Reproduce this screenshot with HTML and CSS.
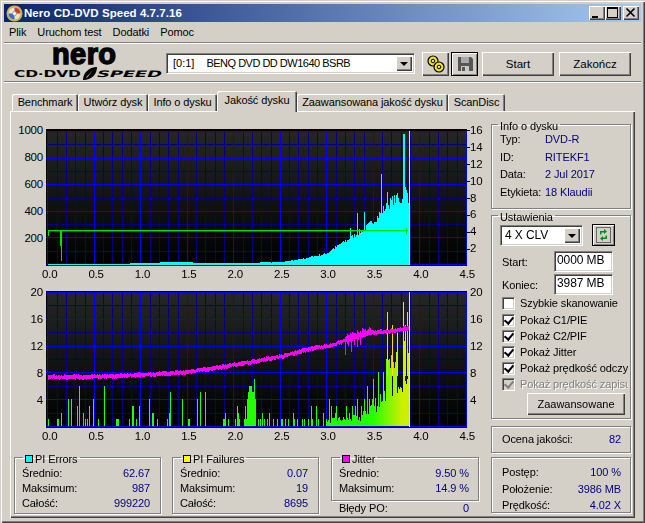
FILE: index.html
```html
<!DOCTYPE html>
<html lang="pl">
<head>
    <meta charset="UTF-8">
    <title>Nero CD-DVD Speed 4.7.7.16</title>
    <link rel="stylesheet" href="styles.css">
</head>
<body>
    <div class="window">
        <div class="titlebar">
            <svg class="app-icon" width="17" height="17" viewBox="0 0 17 17">
                <circle cx="8.5" cy="8.5" r="8" fill="#c9b458"/>
                <circle cx="8.5" cy="8.5" r="6" fill="#e8e4d0"/>
                <path d="M8.5 2.5a6 6 0 0 1 6 6h-6z" fill="#d23c28"/>
                <path d="M8.5 14.5a6 6 0 0 1-6-6h6z" fill="#3c6cc8"/>
                <circle cx="8.5" cy="8.5" r="2" fill="#fff" stroke="#777" stroke-width=".6"/>
            </svg>
            <div class="title-text">Nero CD-DVD Speed 4.7.7.16</div>
            <div class="caption-buttons">
                <div class="caption-btn">
                    <svg width="15" height="14" viewBox="0 0 15 14"><path d="M3 10h6v2H3z"/></svg>
                </div>
                <div class="caption-btn">
                    <svg width="15" height="14" viewBox="0 0 15 14"><path d="M2 1h11v11H2zM3 3v8h9V3z" fill-rule="evenodd"/></svg>
                </div>
                <div class="caption-btn caption-close">
                    <svg width="15" height="14" viewBox="0 0 15 14"><path d="M3.5 2.5l8 8M11.5 2.5l-8 8" stroke="#000" stroke-width="1.7"/></svg>
                </div>
            </div>
        </div>

        <div class="menubar">
            <span>Plik</span>
            <span>Uruchom test</span>
            <span>Dodatki</span>
            <span>Pomoc</span>
        </div>

        <div class="toolbar">
            <div class="logo">
                <div class="logo-nero">nero</div>
                <div class="logo-line">
                    <span class="logo-cd"><span>CD·DVD</span></span>
                    <svg width="15" height="13" viewBox="0 0 15 13"><path d="M1 13C1 6 7 0 15 0c0 7-5 13-14 13zM4 10.500L11 3 5 10.700z" fill="#000" fill-rule="evenodd"/></svg>
                    <span class="logo-speed"><span>SPEED</span></span>
                </div>
            </div>
            <div class="combo drive-combo">
                <div class="combo-text"><span class="drive-id">[0:1]</span>BENQ DVD DD DW1640 BSRB</div>
                <div class="combo-arrow"></div>
            </div>
            <button class="btn icon-btn">
                <svg width="20" height="20" viewBox="0 0 20 20">
                    <g fill="#f4e800" stroke="#000" stroke-width="1.2">
                        <circle cx="7" cy="7" r="5"/>
                        <circle cx="13" cy="13" r="5"/>
                    </g>
                    <circle cx="7" cy="7" r="1.800" fill="#d4d0c8" stroke="#000"/>
                    <circle cx="13" cy="13" r="1.800" fill="#d4d0c8" stroke="#000"/>
                </svg>
            </button>
            <button class="btn icon-btn btn-default">
                <svg width="18" height="18" viewBox="0 0 18 18">
                    <path d="M2 2h13l2 2v12H2z" fill="#555"/>
                    <path d="M5 2h8v6H5z" fill="#a8a8a8"/>
                    <path d="M5 11h8v5H5z" fill="#c8c8c8"/>
                    <path d="M6 12h3v4H6z" fill="#555"/>
                </svg>
            </button>
            <button class="btn text-btn">Start</button>
            <button class="btn text-btn end-btn">Zakończ</button>
        </div>

        <div class="tabs">
            <div class="tab tab-benchmark">Benchmark</div>
            <div class="tab tab-create">Utwórz dysk</div>
            <div class="tab tab-info">Info o dysku</div>
            <div class="tab tab-active">Jakość dysku</div>
            <div class="tab tab-advanced">Zaawansowana jakość dysku</div>
            <div class="tab tab-scan">ScanDisc</div>
        </div>

        <div class="panel">
            <div class="main-col">
                <div class="chart">
                    <div class="y-axis y-left">
                        <span>1000</span><span>800</span><span>600</span><span>400</span><span>200</span><span></span>
                    </div>
                    <canvas id="chartTop" width="421" height="137"></canvas>
                    <div class="y-axis y-right y-ticks">
                        <span>16</span><span>14</span><span>12</span><span>10</span><span>8</span><span>6</span><span>4</span><span>2</span><span></span>
                    </div>
                </div>
                <div class="x-axis">
                    <span>0.0</span><span>0.5</span><span>1.0</span><span>1.5</span><span>2.0</span><span>2.5</span><span>3.0</span><span>3.5</span><span>4.0</span><span>4.5</span>
                </div>

                <div class="chart chart-lower">
                    <div class="y-axis y-left">
                        <span>20</span><span>16</span><span>12</span><span>8</span><span>4</span><span></span>
                    </div>
                    <canvas id="chartBottom" width="421" height="137"></canvas>
                    <div class="y-axis y-right">
                        <span>20</span><span>16</span><span>12</span><span>8</span><span>4</span><span></span>
                    </div>
                </div>
                <div class="x-axis x-axis-lower">
                    <span>0.0</span><span>0.5</span><span>1.0</span><span>1.5</span><span>2.0</span><span>2.5</span><span>3.0</span><span>3.5</span><span>4.0</span><span>4.5</span>
                </div>

                <div class="stats">
                    <fieldset class="group stat-group">
                        <legend><i class="swatch swatch-cyan"></i>PI Errors</legend>
                        <div class="row"><span>Średnio:</span><b>62.67</b></div>
                        <div class="row"><span>Maksimum:</span><b>987</b></div>
                        <div class="row"><span>Całość:</span><b>999220</b></div>
                    </fieldset>
                    <fieldset class="group stat-group">
                        <legend><i class="swatch swatch-yellow"></i>PI Failures</legend>
                        <div class="row"><span>Średnio:</span><b>0.07</b></div>
                        <div class="row"><span>Maksimum:</span><b>19</b></div>
                        <div class="row"><span>Całość:</span><b>8695</b></div>
                    </fieldset>
                    <div class="jitter-col">
                        <fieldset class="group jitter-group">
                            <legend><i class="swatch swatch-magenta"></i>Jitter</legend>
                            <div class="row"><span>Średnio:</span><b>9.50 %</b></div>
                            <div class="row"><span>Maksimum:</span><b>14.9 %</b></div>
                        </fieldset>
                        <div class="row po-row"><span>Błędy PO:</span><b>0</b></div>
                    </div>
                </div>
            </div>

            <div class="side-col">
                <fieldset class="group info-group">
                    <legend>Info o dysku</legend>
                    <div class="info-row"><span>Typ:</span><b>DVD-R</b></div>
                    <div class="info-row"><span>ID:</span><b>RITEKF1</b></div>
                    <div class="info-row"><span>Data:</span><b>2 Jul 2017</b></div>
                    <div class="info-row"><span>Etykieta:</span><b>18 Klaudii</b></div>
                </fieldset>

                <fieldset class="group settings-group">
                    <legend>Ustawienia</legend>
                    <div class="speed-row">
                        <div class="combo speed-combo">
                            <div class="combo-text">4 X CLV</div>
                            <div class="combo-arrow"></div>
                        </div>
                        <button class="btn refresh-btn">
                            <svg width="17" height="18" viewBox="0 0 17 18">
                                <rect x="1.500" y="1.500" width="14" height="15" fill="none" stroke="#000" stroke-dasharray="1 1"/>
                                <path d="M5 8.500V5h4V3l3 2.500L9 8V6.500H6.500v2z" fill="#0a8a1e"/>
                                <path d="M12 9.500V13H8v2l-3-2.500L8 10v1.500h2.500v-2z" fill="#0a8a1e"/>
                            </svg>
                        </button>
                    </div>
                    <div class="field-row"><span>Start:</span><div class="text-input">0000 MB</div></div>
                    <div class="field-row"><span>Koniec:</span><div class="text-input">3987 MB</div></div>
                    <div class="check-row"><i class="check"></i><span>Szybkie skanowanie</span></div>
                    <div class="check-row"><i class="check checked"></i><span>Pokaż C1/PIE</span></div>
                    <div class="check-row"><i class="check checked"></i><span>Pokaż C2/PIF</span></div>
                    <div class="check-row"><i class="check checked"></i><span>Pokaż Jitter</span></div>
                    <div class="check-row"><i class="check checked"></i><span>Pokaż prędkość odczytu</span></div>
                    <div class="check-row disabled"><i class="check checked"></i><span>Pokaż prędkość zapisu</span></div>
                    <button class="btn advanced-btn">Zaawansowane</button>
                </fieldset>

                <div class="frame quality-frame">
                    <div class="row"><span>Ocena jakości:</span><b>82</b></div>
                </div>

                <div class="frame progress-frame">
                    <div class="row"><span>Postęp:</span><b>100 %</b></div>
                    <div class="row"><span>Położenie:</span><b>3986 MB</b></div>
                    <div class="row"><span>Prędkość:</span><b>4.02 X</b></div>
                </div>
            </div>
        </div>
    </div>

    <script src="chart.js"></script>
</body>
</html>
```

FILE: styles.css
```css
* {
    box-sizing: border-box;
}

body {
    margin: 0;
    background: #d4d0c8;
    font-family: "Liberation Sans", Arial, sans-serif;
    font-size: 11px;
    letter-spacing: -0.1px;
    color: #000;
    overflow: hidden;
}

.window {
    width: 645px;
    height: 523px;
    padding: 4px;
    background: #d4d0c8;
    box-shadow: inset 1px 1px 0 #d4d0c8, inset 2px 2px 0 #fff, inset -1px -1px 0 #404040, inset -2px -2px 0 #808080;
}

/* title bar */
.titlebar {
    height: 18px;
    display: flex;
    align-items: center;
    padding: 0 2px 0 2px;
    background: linear-gradient(90deg, #0a246a 0%, #a6caf0 100%);
}

.app-icon {
    flex: none;
    margin-right: 1px;
}

.title-text {
    flex: 1;
    color: #fff;
    font-weight: bold;
    font-size: 11.5px;
    letter-spacing: 0.05px;
}

.caption-buttons {
    display: flex;
}

.caption-btn {
    width: 16px;
    height: 14px;
    background: #d4d0c8;
    box-shadow: inset 1px 1px 0 #fff, inset -1px -1px 0 #404040, inset -2px -2px 0 #808080;
    display: flex;
}

.caption-close {
    margin-left: 2px;
}

/* menu */
.menubar {
    height: 21px;
    display: flex;
    align-items: center;
    gap: 11px;
    padding-left: 5px;
    border-bottom: 1px solid #808080;
}

.toolbar {
    height: 39px;
    display: flex;
    align-items: flex-start;
    border-top: 1px solid #fff;
    border-bottom: 1px solid #808080;
    box-shadow: 0 1px 0 #fff;
}

/* logo */
.logo {
    width: 158px;
    flex: none;
    height: 36px;
    overflow: hidden;
    padding-left: 10px;
}

.logo-nero {
    height: 22px;
    margin-left: 38px;
    font-size: 29px;
    line-height: 20px;
    font-weight: bold;
    letter-spacing: 0.4px;
    -webkit-text-stroke: 1.4px #000;
}

.logo-line {
    display: flex;
    align-items: center;
    height: 13px;
    margin-top: 1px;
    font-family: "DejaVu Sans", sans-serif;
    font-weight: bold;
    font-size: 9px;
}

.logo-cd {
    width: 68px;
    flex: none;
}

.logo-cd span {
    display: inline-block;
    transform: scaleX(1.72);
    transform-origin: left;
}

.logo-speed {
    width: 60px;
    flex: none;
}

.logo-speed span {
    display: inline-block;
    transform: scaleX(2) skewX(-12deg);
    transform-origin: left;
}

/* combos and buttons */
.combo {
    display: flex;
    background: #fff;
    border: 1px solid;
    border-color: #808080 #fff #fff #808080;
    box-shadow: inset 1px 1px 0 #404040, inset -1px -1px 0 #d4d0c8;
    padding: 2px;
}

.drive-combo {
    width: 249px;
    height: 21px;
    margin: 9px 0 0 4px;
    flex: none;
}

.combo-text {
    flex: 1;
    line-height: 15px;
    padding-left: 4px;
    white-space: nowrap;
}

.drive-combo .combo-text {
    letter-spacing: -0.5px;
}

.drive-id {
    margin-right: 12px;
    letter-spacing: 0;
}

.combo-arrow {
    width: 16px;
    flex: none;
    position: relative;
    background: #d4d0c8;
    box-shadow: inset 1px 1px 0 #fff, inset -1px -1px 0 #404040, inset -2px -2px 0 #808080;
}

.combo-arrow::after {
    content: "";
    position: absolute;
    left: 4px;
    top: 6px;
    border: 4px solid transparent;
    border-top-color: #000;
    border-bottom: 0;
}

.btn {
    font: inherit;
    color: #000;
    padding: 0;
    border: 0;
    background: #d4d0c8;
    box-shadow: inset 1px 1px 0 #fff, inset -1px -1px 0 #404040, inset -2px -2px 0 #808080;
    display: flex;
    align-items: center;
    justify-content: center;
}

.icon-btn {
    width: 27px;
    height: 24px;
    margin: 8px 0 0 7px;
    flex: none;
}

.btn-default {
    margin-left: 2px;
    border: 1px solid #000;
    box-shadow: inset 1px 1px 0 #fff, inset -1px -1px 0 #808080;
}

.text-btn {
    width: 72px;
    height: 24px;
    margin: 8px 0 0 4px;
    flex: none;
    font-size: 11.5px;
}

.end-btn {
    margin-left: 5px;
}

/* tabs */
.tabs {
    height: 24px;
    display: flex;
    align-items: flex-end;
    padding-left: 8px;
    margin-top: 5px;
    position: relative;
    z-index: 1;
}

.tab {
    height: 17px;
    text-align: center;
    line-height: 17px;
    white-space: nowrap;
    background: #d4d0c8;
    border-radius: 2px 2px 0 0;
    box-shadow: inset 1px 1px 0 #fff, inset -1px 0 0 #404040, inset -2px 0 0 #808080;
}

.tab-benchmark { width: 66px; }
.tab-create { width: 70px; }
.tab-info { width: 69px; }
.tab-advanced { width: 151px; }
.tab-scan { width: 57px; }

.tab-active {
    width: 80px;
    height: 21px;
    margin-bottom: -1px;
    line-height: 19px;
}

/* main panel */
.panel {
    width: 625px;
    height: 407px;
    margin: 0 0 0 6px;
    display: flex;
    padding: 6px 0 0 1px;
    box-shadow: inset 1px 1px 0 #fff, inset -1px -1px 0 #404040, inset -2px -2px 0 #808080;
}

.main-col {
    width: 474px;
    flex: none;
    padding-top: 12px;
}

.chart {
    display: flex;
    height: 137px;
}

.chart-lower {
    margin-top: 10px;
}

canvas {
    display: block;
    flex: none;
}

.y-axis {
    display: flex;
    flex-direction: column;
    justify-content: space-between;
    line-height: 14px;
    font-size: 11.5px;
    letter-spacing: -0.2px;
    margin: -6px 0;
}

.y-axis span {
    height: 14px;
}

.y-left {
    width: 32px;
    margin-right: 3px;
    text-align: right;
}

.y-right {
    width: 18px;
    padding-left: 3px;
}

.y-ticks {
    padding-left: 0;
}

.y-ticks span:not(:empty)::before {
    content: "";
    display: inline-block;
    width: 3px;
    height: 1px;
    background: #000;
    vertical-align: middle;
}

.x-axis {
    display: flex;
    justify-content: space-between;
    height: 14px;
    margin: 1px 0 0 31px;
    width: 433px;
    line-height: 14px;
    font-size: 11.5px;
    letter-spacing: -0.2px;
}

.x-axis-lower {
    margin-top: 1px;
}

/* group boxes */
.group {
    margin: 0;
    min-width: 0;
    border: 1px solid #808080;
    box-shadow: 1px 1px 0 #fff, inset 1px 1px 0 #fff;
}

.group legend {
    height: 12px;
    padding: 0 2px;
    margin-left: -2px;
    line-height: 16px;
}

.row {
    display: flex;
    justify-content: space-between;
    line-height: 15px;
}

.row b,
.info-row b {
    font-weight: normal;
    color: #000080;
}

.stats {
    display: flex;
    margin: 8px 0 0 3px;
}

.stat-group {
    width: 147px;
    height: 63px;
    margin-right: 11px;
    padding: 3px 10px 0 7px;
}

.stat-group + .stat-group {
    margin-right: 12px;
}

.jitter-col {
    width: 148px;
}

.jitter-group {
    height: 50px;
    padding: 3px 9px 0 7px;
}

.stat-group legend,
.jitter-group legend {
    margin-left: 1px;
}

.po-row {
    padding: 0 10px 0 8px;
}

.swatch {
    display: inline-block;
    width: 8px;
    height: 8px;
    margin-right: 2px;
    border: 1px solid #000;
}

.swatch-cyan { background: #00ffff; }
.swatch-yellow { background: #ffff00; }
.swatch-magenta { background: #ff00ff; }

/* sidebar */
.side-col {
    width: 140px;
    margin-left: 6px;
    flex: none;
}

.info-group {
    height: 91px;
    margin-top: 1px;
    padding: 1px 4px 0 8px;
}

.info-row {
    display: flex;
    height: 17.5px;
    line-height: 17px;
}

.info-row span {
    width: 45px;
    flex: none;
}

.settings-group {
    height: 210px;
    padding: 4px 0 0 8px;
}

.speed-row {
    display: flex;
    align-items: flex-start;
    gap: 9px;
}

.speed-combo {
    width: 83px;
    height: 21px;
}

.speed-combo .combo-text {
    padding-left: 2px;
    font-size: 12px;
}

.refresh-btn {
    width: 23px;
    height: 22px;
    margin-top: -1px;
    border: 1px solid #000;
    box-shadow: inset 1px 1px 0 #fff, inset -1px -1px 0 #808080;
}

.field-row {
    display: flex;
    align-items: center;
    justify-content: space-between;
    height: 21px;
    margin: 2px 17px 0 2px;
}

.speed-row + .field-row {
    margin-top: 5px;
}

.text-input {
    width: 59px;
    height: 21px;
    padding-left: 2px;
    line-height: 17px;
    font-size: 12px;
    background: #fff;
    border: 1px solid;
    border-color: #808080 #fff #fff #808080;
    box-shadow: inset 1px 1px 0 #404040, inset -1px -1px 0 #d4d0c8;
}

.check-row {
    display: flex;
    align-items: center;
    height: 16px;
    margin-left: 2px;
    width: 126px;
    white-space: nowrap;
    overflow: hidden;
}

.check-row + .check-row:nth-of-type(5) {
    margin-top: 1px;
}

.check-row span {
    margin-left: 5px;
}

.check {
    flex: none;
    width: 13px;
    height: 13px;
    background: #fff no-repeat center;
    border: 1px solid;
    border-color: #808080 #fff #fff #808080;
    box-shadow: inset 1px 1px 0 #404040, inset -1px -1px 0 #d4d0c8;
    position: relative;
}

.check.checked::after {
    content: "";
    position: absolute;
    left: 3px;
    top: 0;
    width: 4px;
    height: 7px;
    border: solid #000;
    border-width: 0 2px 2px 0;
    transform: rotate(40deg);
}

.disabled {
    color: #808080;
    text-shadow: 1px 1px 0 #fff;
}

.disabled .check {
    background: #d4d0c8;
}

.disabled .check.checked::after {
    border-color: #808080;
}

.advanced-btn {
    width: 98px;
    height: 22px;
    margin: 1px 0 0 27px;
}

.frame {
    border: 1px solid #808080;
    box-shadow: 1px 1px 0 #fff, inset 1px 1px 0 #fff;
    padding: 0 9px 0 10px;
}

.quality-frame {
    height: 27px;
    margin-top: 7px;
    padding-top: 5px;
}

.progress-frame {
    height: 56px;
    margin-top: 4px;
    padding-top: 6px;
}

.progress-frame .row {
    line-height: 16.500px;
}
```

FILE: chart.js
```js
// seeded so the picture stays the same on every load
let seed = 7;
function rnd() {
    seed = (seed * 16807) % 2147483647;
    return seed / 2147483647;
}

function xAt(v) {
    return Math.round(1.3 + 93 * v);
}

function interp(points, x) {
    for (let i = 1; i < points.length; i++) {
        if (x <= points[i][0]) {
            const a = points[i - 1], b = points[i];
            return a[1] + (b[1] - a[1]) * (x - a[0]) / (b[0] - a[0]);
        }
    }
    return points[points.length - 1][1];
}

function drawGrid(ctx, top, bottom) {
    const grad = ctx.createLinearGradient(0, top, 0, bottom);
    grad.addColorStop(0, '#262626');
    grad.addColorStop(1, '#000');
    ctx.fillStyle = '#000';
    ctx.fillRect(0, 0, 421, 137);
    ctx.fillStyle = grad;
    ctx.fillRect(1, top, 420, bottom - top);

    // thin lines first
    ctx.fillStyle = '#00008c';
    for (let i = 0; i <= 45; i++) {
        if (i % 5) ctx.fillRect(xAt(i / 10), top, 1, bottom - top);
    }
    for (let i = 0; i < 10; i++) {
        if (i % 2) ctx.fillRect(0, Math.round(top + (bottom - top) * i / 10), 421, 1);
    }

    ctx.fillStyle = '#0000ff';
    for (let i = 0; i <= 9; i++) {
        ctx.fillRect(xAt(i / 2), top, 1, bottom - top);
    }
    for (let i = 0; i <= 10; i += 2) {
        ctx.fillRect(0, Math.round(top + (bottom - top) * i / 10), 421, 1);
    }
}

function drawTop() {
    const ctx = document.getElementById('chartTop').getContext('2d');
    const zero = 135;
    drawGrid(ctx, 2, zero);

    // x here is window px, the canvas starts at 46
    const shape = [[48, 1], [80, 1], [130, 1.5], [158, 2], [162, 3], [190, 3], [195, 2], [240, 2], [280, 3],
        [300, 6], [326, 12], [337, 20], [350, 28], [367, 40], [377, 50], [383, 58], [393, 68], [402, 68], [409, 71]];
    const spikes = { 350: 37, 357: 52, 364: 53, 381: 91, 387: 73, 397: 72, 403: 131, 404: 131, 405: 78, 406: 75, 407: 72 };

    ctx.fillStyle = '#00ffff';
    for (let x = 48; x <= 409; x++) {
        let h = interp(shape, x);
        if (x > 270) h = h * (0.88 + rnd() * 0.16);
        if (spikes[x]) h = spikes[x];
        h = Math.max(1, Math.round(h));
        ctx.fillRect(x - 46, zero + 1 - h, 1, h);
    }

    ctx.fillStyle = '#00e000';
    ctx.fillRect(2, 101, 360, 1);
    ctx.fillRect(2, 101, 1, 6);
    ctx.fillRect(14, 101, 2, 16);
    ctx.fillRect(15, 117, 1, 15);
    ctx.fillRect(360, 99, 1, 6);
    ctx.fillStyle = 'rgba(0, 224, 0, 0.4)';
    ctx.fillRect(2, 102, 360, 1);

    ctx.fillStyle = '#dddddd';
    ctx.fillRect(363, 2, 1, 134);
}

function drawBottom() {
    const ctx = document.getElementById('chartBottom').getContext('2d');
    const zero = 135;
    const unit = 6.7;
    drawGrid(ctx, 1, zero);

    // single failure bars, [window x, height]
    const bars = [[48, 1], [57, 1], [58, 1], [61, 2], [68, 4], [71, 4], [77, 3], [79, 6], [83, 2], [85, 1], [87, 1], [89, 3],
        [93, 4], [98, 1], [104, 6], [116, 1], [117, 1], [118, 1], [129, 1], [132, 3], [133, 3], [136, 1], [139, 3], [149, 4],
        [152, 2], [153, 2], [157, 1], [167, 1], [169, 2], [170, 5], [182, 4], [188, 1], [189, 1], [197, 4], [200, 5], [205, 5],
        [223, 1], [224, 1], [225, 2], [228, 1], [235, 1], [237, 3], [238, 2], [239, 1], [244, 1], [245, 3], [246, 1], [247, 4],
        [248, 5], [249, 6], [250, 6], [251, 6], [252, 5], [253, 5], [254, 7], [255, 4], [258, 1], [260, 1], [262, 2], [264, 1],
        [267, 1], [269, 2], [273, 1], [277, 1], [281, 1], [282, 1], [285, 1], [288, 1], [293, 2], [294, 1], [297, 1], [302, 1],
        [304, 1], [308, 1], [311, 3], [312, 1], [316, 3], [318, 1], [323, 2]];

    ctx.fillStyle = '#22ff00';
    bars.forEach(function(b) {
        ctx.fillRect(b[0] - 46, zero - Math.round(b[1] * unit), 1, Math.round(b[1] * unit));
    });

    const extra = { 329: 4, 331: 3, 335: 2, 336: 3, 346: 3, 349: 2, 352: 3, 355: 3, 357: 4, 361: 3, 364: 4, 367: 6, 369: 4, 372: 4, 373: 7, 378: 8, 383: 8, 386: 10 };
    const level = [[326, 1], [360, 1.5], [366, 3], [380, 5], [388, 9], [395, 10], [400, 11], [409, 12]];
    for (let x = 326; x <= 409; x++) {
        let v = interp(level, x) * (0.45 + rnd() * 0.7);
        if (extra[x]) v = extra[x];
        const h = Math.round(v * unit);
        const t = Math.max(0, Math.min(1, (x - 372) / 30));
        const r = Math.round(34 + (205 - 34) * t);
        ctx.fillStyle = 'rgb(' + r + ',' + (255 - Math.round(15 * t)) + ',0)';
        ctx.fillRect(x - 46, zero - h, 1, h);
    }

    // the tall yellow ones
    const tall = { 387: 17, 392: 15, 397: 14, 403: 18.500, 405: 15, 407: 17 };
    Object.keys(tall).forEach(function(x) {
        const h = Math.round(tall[x] * unit);
        ctx.fillStyle = '#ffdc00';
        ctx.fillRect(x - 46, zero - h, 1, h - 50);
    });

    // jitter
    const curve = [[48, 377], [83, 377], [140, 375], [187, 372], [233, 365], [250, 362], [283, 356], [313, 348], [330, 346],
        [350, 338], [360, 335], [370, 332], [383, 332], [397, 330], [408, 328]];
    ctx.fillStyle = '#ff00ff';
    for (let x = 48; x <= 408; x++) {
        const y = interp(curve, x) - 291;
        let up = 1.2 + rnd() * 1.5;
        let down = 1.2 + rnd() * 1.5;
        if (x >= 345 && x < 372) {
            up += rnd() * 4;
            down += (x % 3 === 0) ? rnd() * 14 : rnd() * 2;
        }
        ctx.fillRect(x - 46, Math.round(y - up), 1, Math.round(up + down));
    }

    ctx.fillStyle = '#dddddd';
    ctx.fillRect(363, 1, 1, 135);
}

drawTop();
drawBottom();
```
